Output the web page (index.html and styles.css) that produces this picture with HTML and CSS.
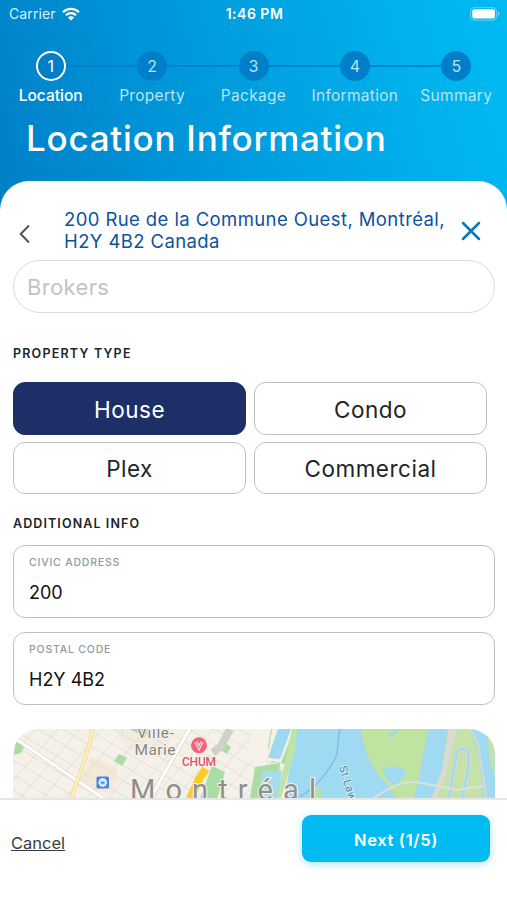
FILE: index.html
```html
<!DOCTYPE html>
<html lang="en">
<head>
  <meta charset="UTF-8" />
  <meta name="viewport" content="width=device-width, initial-scale=1.0" />
  <title>Location Information</title>
  <link rel="stylesheet" href="styles.css">
</head>
<body>
  <div class="screen">
    <header>
      <div class="status-bar">
        <div class="carrier">
          <span>Carrier</span>
          <svg width="18" height="14" viewBox="0 0 18 14" fill="none" stroke="#fff" stroke-width="2.3">
            <path d="M1 5.2a11.4 11.4 0 0 1 16 0" />
            <path d="M3.9 8.2a7.2 7.2 0 0 1 10.2 0" />
            <path d="M9 13.6 5.9 10.5a4.4 4.4 0 0 1 6.2 0z" fill="#fff" stroke="none" />
          </svg>
        </div>
        <span class="time">1:46 PM</span>
        <svg class="battery" width="30" height="14" viewBox="0 0 30 14">
          <rect x=".6" y=".6" width="26" height="12.6" rx="3.6" fill="none" stroke="#fff" stroke-opacity=".4" />
          <rect x="2.3" y="2.3" width="22.6" height="9.2" rx="2" fill="#fff" />
          <path d="M28 4.8c1.8.6 1.8 3.6 0 4.2z" fill="#fff" fill-opacity=".5" />
        </svg>
      </div>

      <div class="steps">
        <div class="step active"><div class="track"><span class="dot">1</span></div><p>Location</p></div>
        <div class="step"><div class="track"><span class="dot">2</span></div><p>Property</p></div>
        <div class="step"><div class="track"><span class="dot">3</span></div><p>Package</p></div>
        <div class="step"><div class="track"><span class="dot">4</span></div><p>Information</p></div>
        <div class="step"><div class="track"><span class="dot">5</span></div><p>Summary</p></div>
      </div>

      <h1>Location Information</h1>
    </header>

    <main class="sheet">
      <div class="address-bar">
        <svg class="back" width="14" height="20" viewBox="0 0 14 20" fill="none" stroke="#555" stroke-width="2">
          <path d="M11 1.5 2.7 10l8.3 8.5" />
        </svg>
        <p class="address">200 Rue de la Commune Ouest, Montréal,<br>H2Y 4B2 Canada</p>
        <svg class="close" width="20" height="20" viewBox="0 0 20 20" fill="none" stroke="#0878bd" stroke-width="2.5" stroke-linecap="round">
          <path d="M2 2l16 16M18 2 2 18" />
        </svg>
      </div>

      <input class="brokers" type="text" placeholder="Brokers" />

      <h2>Property type</h2>
      <div class="types">
        <button class="type selected">House</button>
        <button class="type">Condo</button>
        <button class="type">Plex</button>
        <button class="type">Commercial</button>
      </div>

      <h2 class="info-title">Additional info</h2>
      <div class="field">
        <label>Civic address</label>
        <p>200</p>
      </div>
      <div class="field">
        <label>Postal code</label>
        <p>H2Y 4B2</p>
      </div>

      <div class="map">
        <svg width="482" height="110" viewBox="0 0 482 110">
          <defs>
            <pattern id="blocks" width="17" height="13" patternUnits="userSpaceOnUse" patternTransform="rotate(31) skewX(-10)">
              <path d="M0 0H17M0 0V13" fill="none" stroke="#dedbd2" stroke-width="1.3" />
            </pattern>
          </defs>
          <rect width="482" height="110" fill="#f5f1e8" />
          <path d="M78 28l27 12-5 24-34-4z" fill="#f5e8d8" />
          <path d="M105 0h58l-16 28-35-8z" fill="#f1ebe0" />
          <rect width="285" height="110" fill="url(#blocks)" />

          <!-- parks -->
          <g fill="#a9dda3">
            <path d="M3 9l10 5-5 10-7 2z" />
            <path d="M106 25l8 4-5 8-8-5z" />
            <path d="M116 0h20l-4 8z" />
            <path d="M212 14l6 4-4 7-6-4z" />
            <path d="M199 37l13 6-8 27h-17z" />
            <path d="M242 38l25-4-3 35h-27z" />
            <path d="M252 0h32l-10 35-16-2z" />
          </g>
          <path d="M238 0h20l-6 34-16-4z" fill="#f6f2e9" />
          <path d="M259 0h22l-13 34-14-3z" fill="#f3f0e4" />
          <path d="M265 0h13l-11 30-12-1z" fill="#9dd9f0" />
          <path d="M249 42h20l-3 28h-20z" fill="#a6dcec" />

          <!-- roads -->
          <path d="M217 0l-9 17-8 7" fill="none" stroke="#d3d0ca" stroke-width="8" />
          <path d="M3 10l87 59M177-1l-36 64" fill="none" stroke="#ddd9d1" stroke-width="4.5" />
          <path d="M3 10l87 59M177-1l-36 64" fill="none" stroke="#fff" stroke-width="3" />
          <path d="M80-1C76 20 70 36 58 70" fill="none" stroke="#eed99a" stroke-width="4" />
          <path d="M80-1C76 20 70 36 58 70" fill="none" stroke="#fff1bb" stroke-width="2.4" />
          <path d="M193 40l-7 10-9 20" fill="none" stroke="#fccb24" stroke-width="8" />

          <!-- river and islands -->
          <path d="M284 0h198v110H265l7-45z" fill="#9fdaf2" />
          <path d="M284 0l-2 23-14 46-4-1 8-35 7-33z" fill="#bfe3a8" />
          <path d="M304 57l5 2-2 14h-8z" fill="#b6dfa9" />
          <path d="M348 0c4 26 12 42 26 55l10 15h16c5-14 6-25 9-40l6-30z" fill="#bfe3a1" stroke="#ccd6b5" />
          <path d="M370 41c8-6 18-3 22 1 1 7-6 10-9 15-5-2-12-9-13-16zM375 6l5-4 4 1-6 5zM381 0h6l-4 3z" fill="#9fdaf2" />
          <path d="M435 0h22c5 12 10 28 13 70h-50c4-14 10-24 10-38z" fill="#c5e2a8" />
          <path d="M436 0h8l-3 15-9 34-9 21h-5l12-31z" fill="#dcdacb" />
          <path d="M436 68l8-46q7-5 11 1c3 15-4 30-6 50" fill="none" stroke="#d8dccb" stroke-width="4.5" />
          <path d="M436 68l8-46q7-5 11 1c3 15-4 30-6 50" fill="none" stroke="#9fdaf2" stroke-width="2.5" />
          <path d="M474 2c6 8 8 20 8 45l-5-15z" fill="#c5e2a8" />
          <path d="M457 0l8 14 8 55" fill="none" stroke="#d5dbc7" stroke-width="2" />
          <path d="M327 0c-3 12-1 22-5 30-8 14-20 30-36 38" fill="none" stroke="#80bdec" stroke-width="1.5" />
          <path d="M361 69c8-5 23-17 41-16l28 5 14 3 26-4" fill="none" stroke="#dce2db" stroke-width="2" />

          <!-- places -->
          <rect x="83.5" y="47.5" width="12.5" height="12" rx="1.5" fill="#4a87dd" />
          <circle cx="89.7" cy="53.5" r="3.5" fill="#bbd8ff" stroke="#fff" stroke-width="1.3" />
          <path d="M88 53h3.5v1.5H88z" fill="#397bd2" />
          <circle cx="186" cy="16.3" r="8" fill="#f46278" />
          <path d="M182 13l4 8 4-8M184 12.5l2 4 2-4" fill="none" stroke="#ffd3da" stroke-width="1.4" />
          <g class="place">
            <text x="124" y="9" textLength="37">Ville-</text>
            <text x="121.5" y="25.5" textLength="41">Marie</text>
          </g>
          <text class="hospital" x="169" y="36.5" textLength="34">CHUM</text>
          <text class="city" x="117" y="71" textLength="186">Montréal</text>
          <text class="river" x="0" y="0" transform="translate(326 38) rotate(73)">St.Lawrence</text>
        </svg>
      </div>
    </main>

    <footer>
      <a class="cancel">Cancel</a>
      <button class="next">Next (1/5)</button>
    </footer>
  </div>
</body>
</html>
```

FILE: styles.css
```css
:root {
  --blue: #00bbf2;
  --navy: #1e2f68;
  --dot: #007fc8;
  --text: #202528;
  --border: #bfc2c3;
}

* {
  box-sizing: border-box;
}

body {
  margin: 0;
  font-family: Inter, "Liberation Sans", sans-serif;
  color: var(--text);
  background: #fff;
}

p, h1, h2 {
  margin: 0;
}

button, input {
  font-family: inherit;
}

.screen {
  display: flex;
  flex-direction: column;
  height: 900px;
  overflow: hidden;
  background: linear-gradient(75deg, #007fc7 0%, #009cde 45%, #00b4ee 85%, #00baf2 100%) 0 0 / 100% 214px no-repeat;
}

header {
  height: 181px;
  flex: none;
  color: #fff;
}

.status-bar {
  display: grid;
  grid-template-columns: 1fr auto 1fr;
  align-items: center;
  height: 27px;
  padding: 0 7px 0 9px;
  font-size: 14px;
}

.carrier {
  display: flex;
  align-items: center;
  gap: 6px;
  color: #d9f0fb;
  letter-spacing: 0.1px;
}

.time {
  font-weight: 600;
  letter-spacing: 0.5px;
}

.battery {
  justify-self: end;
}

.steps {
  display: grid;
  grid-template-columns: repeat(5, 1fr);
  padding-top: 24px;
}

.step {
  text-align: center;
  color: #b5e5fa;
}

.step p {
  margin-top: 5px;
  font-size: 15.5px;
  line-height: 20px;
  letter-spacing: 0.3px;
}

.track {
  display: flex;
  align-items: center;
}

.track::before,
.track::after {
  content: "";
  flex: 1;
  height: 2px;
  background-color: #0083ca;
}

.step:first-child .track::before,
.step:last-child .track::after {
  background: none;
}

.dot {
  width: 30px;
  height: 30px;
  border-radius: 50%;
  background-color: var(--dot);
  font-size: 16px;
  line-height: 30px;
}

.step.active {
  color: #fff;
}

.step.active p {
  font-weight: 500;
  letter-spacing: 0;
}

.step.active .dot {
  border: 2px solid #fff;
  line-height: 26px;
}

h1 {
  padding: 11px 26px 0;
  font-size: 35px;
  font-weight: 500;
  line-height: 42px;
  letter-spacing: 0.75px;
  white-space: nowrap;
}

.sheet {
  flex: 1;
  min-height: 0;
  overflow: hidden;
  padding: 27px 12px 0 13px;
  background-color: #fff;
  border-radius: 29px 29px 0 0;
}

.address-bar {
  display: flex;
  align-items: flex-start;
  height: 52px;
}

.back {
  margin: 16px 32px 0 5px;
  flex: none;
}

.address {
  flex: 1;
  color: #0c529f;
  font-size: 18.5px;
  line-height: 22px;
  letter-spacing: 0.4px;
  white-space: nowrap;
}

.close {
  margin: 13px 14px 0 0;
  flex: none;
}

.brokers {
  display: block;
  width: 100%;
  height: 53px;
  padding: 0 13px;
  border: 1px solid #dadada;
  border-radius: 27px;
  font-size: 22px;
  letter-spacing: 0.35px;
  outline: none;
}

.brokers::placeholder {
  color: #c3c3c3;
}

h2 {
  margin-top: 33px;
  font-size: 12.5px;
  font-weight: 600;
  line-height: 16px;
  letter-spacing: 1.2px;
  text-transform: uppercase;
}

.types {
  display: grid;
  grid-template-columns: 1fr 1fr;
  gap: 7px 8px;
  margin: 20px 8px 0 0;
}

.type {
  height: 52.5px;
  padding: 2px 0 0;
  border: 1px solid var(--border);
  border-radius: 12px;
  background-color: #fff;
  color: var(--text);
  font-size: 22.5px;
  letter-spacing: 0.5px;
}

.type.selected {
  border-color: var(--navy);
  background-color: var(--navy);
  color: #fff;
}

.info-title {
  margin: 22px 0 13px;
  letter-spacing: 1.1px;
}

.field {
  height: 73px;
  margin-bottom: 14px;
  padding: 10px 15px;
  border: 1px solid var(--border);
  border-radius: 12px;
}

.field label {
  display: block;
  color: #92979c;
  font-size: 10.5px;
  font-weight: 500;
  line-height: 14px;
  letter-spacing: 0.8px;
  text-transform: uppercase;
}

.field p {
  margin-top: 12px;
  color: #111;
  font-size: 18px;
  line-height: 22px;
}

.map {
  height: 110px;
  margin-top: 24px;
  overflow: hidden;
  border-radius: 26px;
}

.map svg {
  display: block;
}

.map text {
  font-family: Roboto, sans-serif;
  paint-order: stroke;
  stroke: #f7f4ec;
  stroke-width: 2px;
}

.place {
  fill: #89857f;
  font-size: 15.5px;
}

.map .hospital {
  fill: #df5268;
  font-size: 12px;
  font-weight: 500;
}

.map .city {
  fill: #8f8f8c;
  font-size: 29px;
}

.map .river {
  fill: #5585a6;
  stroke: #c8eaf6;
  font-size: 11px;
  letter-spacing: 0.5px;
}

footer {
  display: flex;
  justify-content: space-between;
  align-items: flex-start;
  flex: none;
  height: 102px;
  padding: 15px 17px 0 11px;
  border-top: 2px solid #e6e6e6;
  background-color: #fff;
}

.cancel {
  margin-top: 17px;
  color: #383d40;
  font-size: 16.5px;
  line-height: 22px;
  text-decoration: underline;
}

.next {
  width: 188px;
  height: 47px;
  padding: 2px 0 0;
  border: none;
  border-radius: 9px;
  background-color: var(--blue);
  color: #fff;
  box-shadow: 0 2px 8px rgba(0, 187, 242, 0.35);
  font-size: 16.5px;
  font-weight: 600;
  letter-spacing: 0.65px;
}
```
